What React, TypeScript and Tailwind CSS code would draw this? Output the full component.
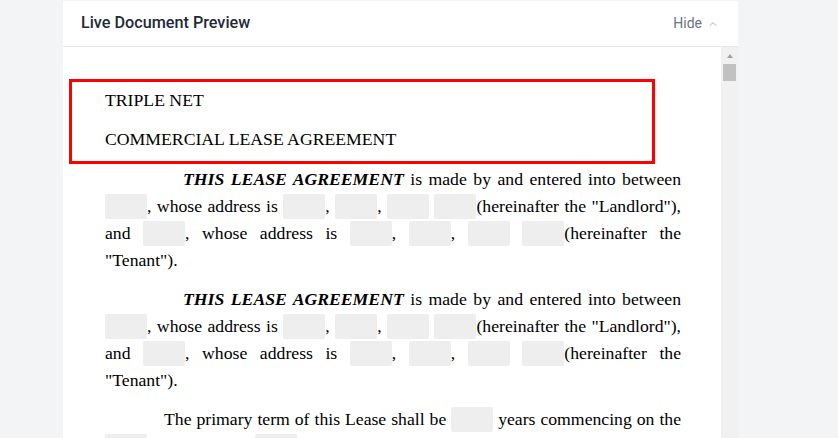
import { ChevronUp } from "lucide-react";

function Blank() {
  return (
    <span className="inline-block h-[25px] w-[42px] rounded-[2px] bg-[#eeeeee] align-[-7px]" />
  );
}

export default function App() {
  return (
    <div className="h-[438px] overflow-hidden bg-[#f3f4f6] pt-px">
      <div className="ml-[63px] flex h-[437px] w-[675px] flex-col bg-white">
        {/* Header */}
        <div className="flex h-[46px] shrink-0 items-center justify-between border-b border-[#e5e7eb] pl-[18px] pr-[19px] font-['Roboto',sans-serif]">
          <h2 className="text-[16.2px] font-medium text-[#1f2937]">
            Live Document Preview
          </h2>
          <button className="flex items-center gap-[5px] text-[14px] text-[#6b7280]">
            Hide
            <ChevronUp size={12} strokeWidth={1.5} className="text-[#8f96a3]" />
          </button>
        </div>

        {/* Document */}
        <div className="flex min-h-0 flex-1">
          <div className="flex-1 overflow-hidden pt-[32px] font-['Liberation_Serif','Times_New_Roman',serif] text-[17.7px] leading-[27px] text-black">
            {/* Title highlight */}
            <div className="ml-[6px] w-[586px] border-[3px] border-[#ff0000] pb-[8px] pl-[33px] pt-[5px]">
              <p className="mb-[12px]">TRIPLE NET</p>
              <p>COMMERCIAL LEASE AGREEMENT</p>
            </div>

            <div className="pl-[42px] pr-[40px] pt-[2px] text-justify">
              <p className="mb-[12px] indent-[78px]">
                <b>
                  <i>THIS LEASE AGREEMENT</i>
                </b>{" "}
                is made by and entered into between <Blank />, whose address is{" "}
                <Blank />, <Blank />, <Blank /> <Blank />
                (hereinafter the "Landlord"), and <Blank />, whose address is{" "}
                <Blank />, <Blank />, <Blank /> <Blank />
                (hereinafter the "Tenant").
              </p>

              <p className="mb-[12px] indent-[78px]">
                <b>
                  <i>THIS LEASE AGREEMENT</i>
                </b>{" "}
                is made by and entered into between <Blank />, whose address is{" "}
                <Blank />, <Blank />, <Blank /> <Blank />
                (hereinafter the "Landlord"), and <Blank />, whose address is{" "}
                <Blank />, <Blank />, <Blank /> <Blank />
                (hereinafter the "Tenant").
              </p>

              <p className="mb-[12px] indent-[59px]">
                The primary term of this Lease shall be <Blank /> years
                commencing on the <Blank /> day of month <Blank /> (the
                "Commencement Date"), and ending on the last day of the term.
              </p>
            </div>
          </div>

          {/* Scrollbar */}
          <div className="flex w-[17px] shrink-0 flex-col items-center bg-[#f1f1f1]">
            <div className="mt-[7px] h-0 w-0 border-x-[3.5px] border-b-[4px] border-x-transparent border-b-[#a3a3a3]" />
            <div className="mt-[6px] h-[17px] w-[13px] bg-[#c1c1c1]" />
          </div>
        </div>
      </div>
    </div>
  );
}
